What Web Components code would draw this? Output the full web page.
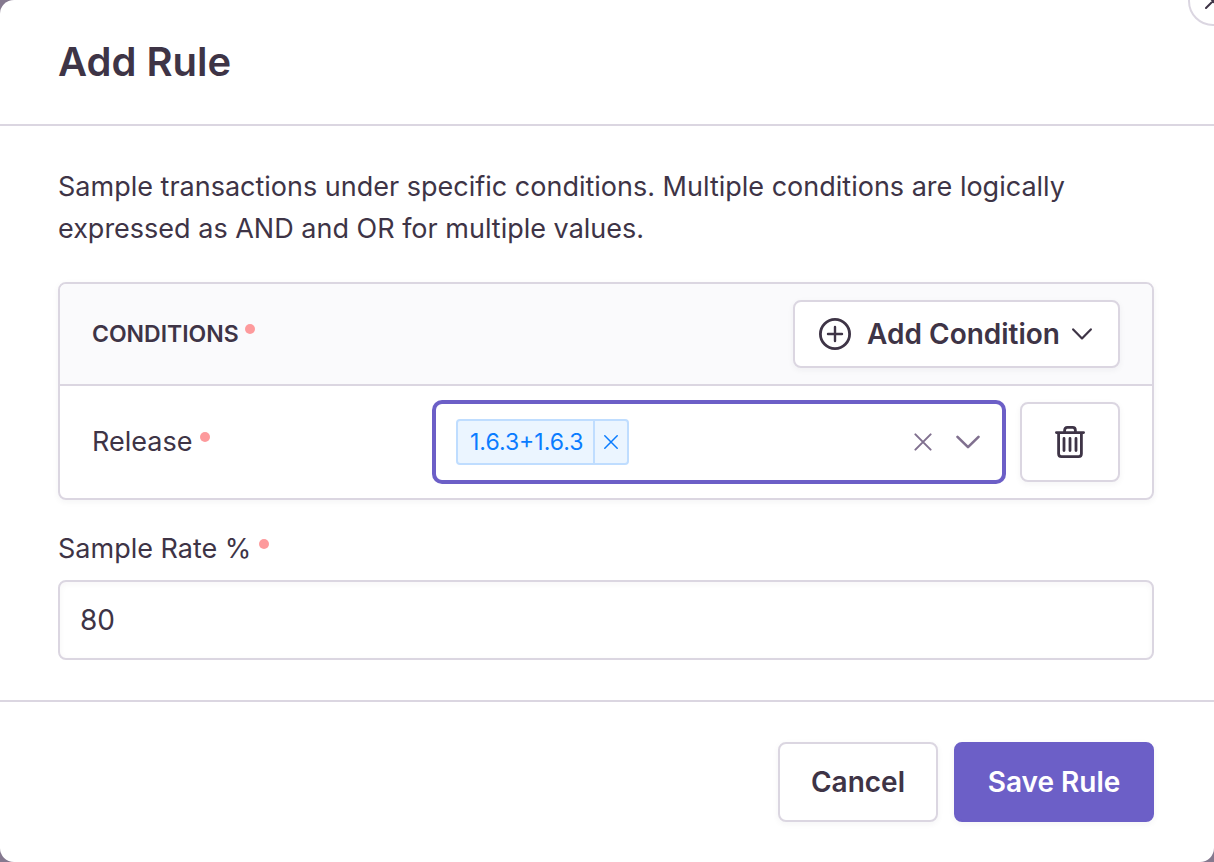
<!DOCTYPE html>
<html lang="en">
<head>
<meta charset="utf-8">
<meta name="viewport" content="width=device-width, initial-scale=1">
<title>Add Rule</title>
<style>
  :root {
    --text: #3e3446;
    --muted: #80708f;
    --border: #dbd6e1;
    --surface: #fafafc;
    --accent: #6c5fc7;
    --required: #fd9a9c;
    --drop: 0 2px 6px rgba(43, 34, 51, 0.05);
  }
  body {
    margin: 0;
    background: #85798f;
    color: var(--text);
    font: 400 27px/42px Inter, "Open Sans", sans-serif;
  }
</style>
</head>
<body>
<rule-modal>
  <span slot="title">Add Rule</span>
  <rule-text>Sample transactions under specific conditions. Multiple conditions are logically expressed as AND and OR for multiple values.</rule-text>
  <condition-panel heading="Conditions">
    <condition-row label="Release" value="1.6.3+1.6.3"></condition-row>
  </condition-panel>
  <rate-field label="Sample Rate %" value="80"></rate-field>
  <rule-button slot="footer">Cancel</rule-button>
  <rule-button slot="footer" primary>Save Rule</rule-button>
</rule-modal>

<script>
const base = `*, *::before, *::after { box-sizing: border-box; }
  button, input { font: inherit; color: inherit; margin: 0; }
  button { cursor: pointer; }
  svg { display: block; flex: none; fill: none; stroke: currentColor; stroke-linecap: round; stroke-linejoin: round; }`;

function define(name, render) {
  customElements.define(name, class extends HTMLElement {
    connectedCallback() {
      if (this.shadowRoot) return;
      const template = document.createElement('template');
      template.innerHTML = render(this);
      this.attachShadow({ mode: 'open' }).append(template.content.cloneNode(true));
    }
  });
}

define('required-dot', () => `<style>
  :host { display: block; flex: none; width: 10px; height: 10px; margin-bottom: 10px; border-radius: 50%; background: var(--required); }
</style>`);

define('rule-text', () => `<style>
  :host { display: block; padding-bottom: 4px; }
  p { margin: 0; }
</style><p><slot></slot></p>`);

define('rule-modal', () => `<style>${base}
  :host { display: block; position: relative; overflow: clip; }
  section { background: #fff; border-radius: 14px; }
  header { padding: 40px 60px 40px 58px; border-bottom: 2px solid var(--border); }
  h1 { margin: 0; font-size: 40px; line-height: 44px; font-weight: 600; }
  .body { padding: 40px 60px 40px 58px; display: flex; flex-direction: column; gap: 28px; }
  footer { display: flex; justify-content: flex-end; gap: 16px; padding: 40px 60px; border-top: 2px solid var(--border); }
  .close { position: absolute; top: -24px; right: -24px; width: 50px; height: 50px; padding: 0; display: grid; place-items: center;
    border: 2px solid var(--border); border-radius: 50%; background: #fff; }
</style>
<section role="dialog" aria-labelledby="title">
  <header><h1 id="title"><slot name="title"></slot></h1></header>
  <div class="body"><slot></slot></div>
  <footer><slot name="footer"></slot></footer>
</section>
<button class="close" aria-label="Close"><svg width="16" height="16" viewBox="0 0 16 16" stroke-width="2"><path d="M1 1 15 15M15 1 1 15"/></svg></button>`);

define('condition-panel', el => `<style>${base}
  :host { display: block; border: 2px solid var(--border); border-radius: 8px; box-shadow: var(--drop); }
  header { display: flex; align-items: center; justify-content: space-between; padding: 16px 32px; background: var(--surface);
    border-bottom: 2px solid var(--border); border-radius: 6px 6px 0 0; }
  .heading { display: flex; align-items: center; gap: 6px; }
  h2 { margin: 0; font-size: 23px; line-height: 28px; font-weight: 600; text-transform: uppercase; }
  button { display: flex; align-items: center; height: 68px; padding: 0 26px 0 24px; border: 2px solid var(--border); border-radius: 8px;
    background: #fff; box-shadow: var(--drop); font-size: 28px; font-weight: 600; }
  button span { margin: 0 12px 0 16px; }
</style>
<header>
  <div class="heading"><h2>${el.getAttribute('heading')}</h2><required-dot></required-dot></div>
  <button aria-haspopup="menu">
    <svg width="32" height="32" viewBox="0 0 32 32"><circle cx="16" cy="16" r="14.6" stroke-width="2.8"/><path stroke-width="2.4" d="M16 9v14M9 16h14"/></svg>
    <span>Add Condition</span>
    <svg width="20" height="12" viewBox="0 0 20 12" stroke-width="2.2"><path d="M1.2 1.4 10 10.4 18.8 1.4"/></svg>
  </button>
</header>
<slot></slot>`);

define('condition-row', el => `<style>${base}
  :host { display: flex; gap: 16px; padding: 16px 32px; }
  .field { flex: 1; min-width: 0; display: grid; grid-template-columns: minmax(0, 3fr) minmax(0, 5fr); align-items: center; }
  .label { display: flex; align-items: center; gap: 8px; }
  .select { display: flex; align-items: center; height: 80px; padding: 0 22px 0 20px; border: 2px solid var(--accent); border-radius: 8px;
    box-shadow: 0 0 0 2px var(--accent); background: #fff; }
  .token { display: flex; height: 46px; border: 2px solid #bfddff; border-radius: 4px; background: #ebf5ff; color: #0a7cff;
    font-size: 23px; line-height: 42px; }
  .token span { padding: 0 10px 0 12px; }
  .token button { width: 34px; padding: 0; display: grid; place-items: center; border: 0; border-left: 2px solid #bfddff; background: none; }
  input { flex: 1; min-width: 0; padding: 0 8px; border: 0; outline: 0; background: none; }
  .plain { padding: 0; border: 0; background: none; color: var(--muted); }
  .plain + .plain { margin-left: 24px; }
  .remove { width: 100px; height: 80px; padding: 0; display: grid; place-items: center; border: 2px solid var(--border); border-radius: 8px;
    background: #fff; box-shadow: var(--drop); }
</style>
<div class="field">
  <div class="label"><label for="values">${el.getAttribute('label')}</label><required-dot></required-dot></div>
  <div class="select">
    <div class="token"><span>${el.getAttribute('value')}</span><button aria-label="Remove value"><svg width="14" height="14" viewBox="0 0 14 14" stroke-width="1.5"><path d="M.8 .8 13.2 13.2M13.2 .8 .8 13.2"/></svg></button></div>
    <input id="values" role="combobox" aria-expanded="false" autocomplete="off">
    <button class="plain" aria-label="Clear all"><svg width="18" height="18" viewBox="0 0 18 18" stroke-width="2"><path d="M1.4 1.4 16.6 16.6M16.6 1.4 1.4 16.6"/></svg></button>
    <button class="plain" aria-label="Open list"><svg width="24" height="14" viewBox="0 0 24 14" stroke-width="2.6"><path d="M1.5 1.8 12 12.2 22.5 1.8"/></svg></button>
  </div>
</div>
<button class="remove" aria-label="Delete condition">
  <svg width="30" height="32" viewBox="0 0 30 32" stroke-width="2.8"><path d="M1.4 6.6H28.6M3.6 6.6V27.8Q3.6 30.6 6.4 30.6H23.6Q26.4 30.6 26.4 27.8V6.6M9.6 6V4.4Q9.6 1.4 12.4 1.4H17.6Q20.4 1.4 20.4 4.4V6M9 12.4V24.6M15 12.4V24.6M21 12.4V24.6"/></svg>
</button>`);

define('rate-field', el => `<style>${base}
  :host { display: flex; flex-direction: column; gap: 10px; }
  .label { display: flex; align-items: center; gap: 8px; }
  input { width: 100%; height: 80px; padding: 0 20px; border: 2px solid var(--border); border-radius: 8px; background: #fff;
    box-shadow: inset 0 2px 6px rgba(43, 34, 51, 0.04); outline: 0; font-size: 28px; }
</style>
<div class="label"><label for="rate">${el.getAttribute('label')}</label><required-dot></required-dot></div>
<input id="rate" inputmode="numeric" value="${el.getAttribute('value')}">`);

define('rule-button', () => `<style>${base}
  :host { display: block; }
  button { min-width: 160px; height: 80px; padding: 0 24px; border: 2px solid var(--border); border-radius: 8px; background: #fff;
    box-shadow: var(--drop); font-size: 28px; font-weight: 600; }
  :host([primary]) button { min-width: 200px; border-color: var(--accent); background: var(--accent); color: #fff; }
</style><button><slot></slot></button>`);
</script>
</body>
</html>
